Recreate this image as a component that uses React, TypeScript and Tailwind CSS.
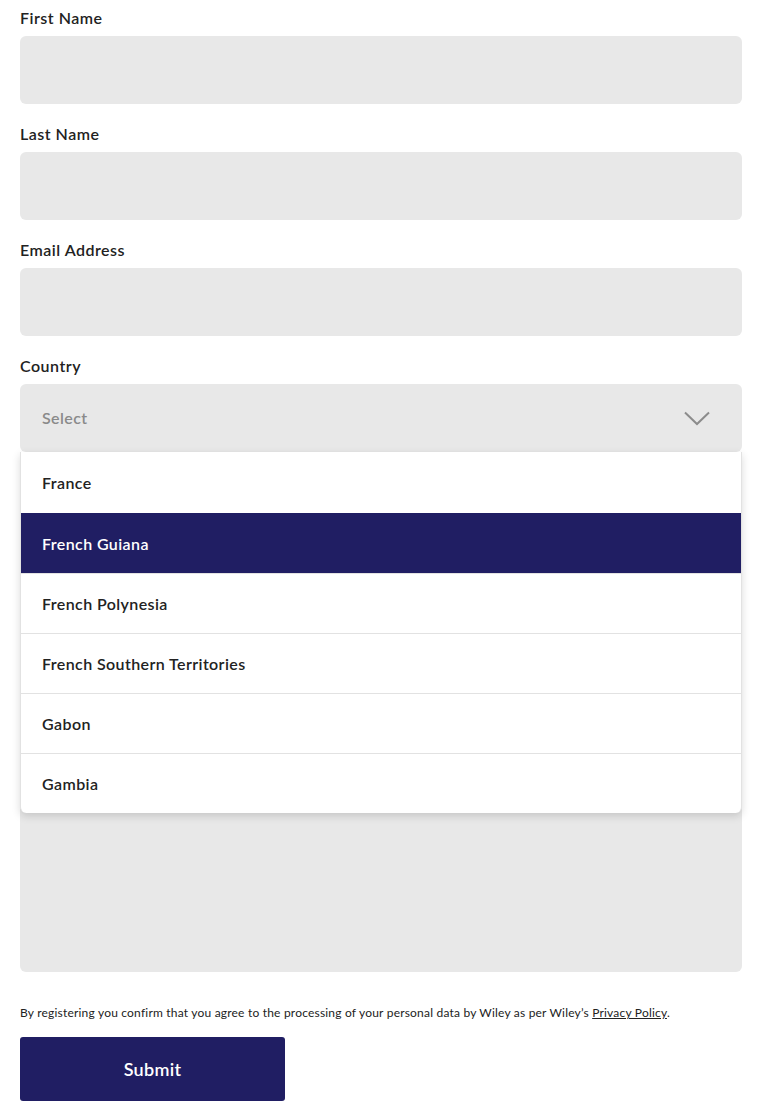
const COUNTRIES = ['France', 'French Guiana', 'French Polynesia', 'French Southern Territories', 'Gabon', 'Gambia'];

const Field = ({ label, tall, hidden }: { label: string; tall?: boolean; hidden?: boolean }) => (
  <div>
    <label
      className={`block h-[36px] pt-[7px] text-[16px] font-semibold leading-[22px] tracking-[0.5px] text-[#222] ${hidden ? 'invisible' : ''}`}
    >
      {label}
    </label>
    <div className={`${tall ? 'h-[472px]' : 'h-[68px]'} rounded-md bg-[#e8e8e8]`} />
  </div>
);

export default function App() {
  const selected = 'French Guiana';
  return (
    <div className="pl-5 pr-6 pb-4 font-['Lato',sans-serif] text-[#222]">
      <div className="flex flex-col gap-[12px]">
        <div className="-mt-[12px]" />
        <Field label="First Name" />
        <Field label="Last Name" />
        <Field label="Email Address" />

        <div className="relative">
          <label className="block h-[36px] pt-[7px] text-[16px] font-semibold leading-[22px] tracking-[0.5px]">Country</label>
          <div className="flex h-[68px] items-center justify-between rounded-md bg-[#e8e8e8] pl-[22px] pr-[32px]">
            <span className="text-[16px] font-semibold tracking-[0.4px] text-[#8a8a8a]">Select</span>
            <svg width="26" height="15" viewBox="0 0 26 15" fill="none">
              <path d="M1 1.5 L13 13 L25 1.5" stroke="#8c8c8c" strokeWidth="2" />
            </svg>
          </div>
          {/* liste déroulante ouverte, par-dessus le champ suivant */}
          <ul className="absolute left-0 right-0 top-[104px] z-10 overflow-hidden rounded-b-md border-x border-[#e2e2e2] bg-white shadow-[0_3px_8px_rgba(0,0,0,0.15)]">
            {COUNTRIES.map((c, i) => (
              <li
                key={c}
                className={`flex items-center pl-[21px] text-[16px] font-semibold tracking-[0.4px] ${
                  i === 0 ? 'h-[61px]' : 'h-[60px]'
                } ${c === selected ? 'bg-[#201e63] text-white' : 'text-[#222]'} ${
                  i > 0 ? (c === selected ? 'border-t border-[#201e63]' : 'border-t border-[#e2e2e2]') : ''
                }`}
              >
                {c}
              </li>
            ))}
          </ul>
        </div>

        <Field label="Message" tall hidden />
      </div>

      <p className="mt-[33px] text-[12px] leading-[15px] tracking-[0.2px] text-[#222]">
        By registering you confirm that you agree to the processing of your personal data by Wiley as per Wiley’s{' '}
        <a className="underline">Privacy Policy</a>.
      </p>

      <button className="mt-[17px] h-[64px] w-[265px] rounded-[3px] bg-[#201e63] text-[18px] font-semibold tracking-[0.3px] text-white">
        Submit
      </button>
    </div>
  );
}
